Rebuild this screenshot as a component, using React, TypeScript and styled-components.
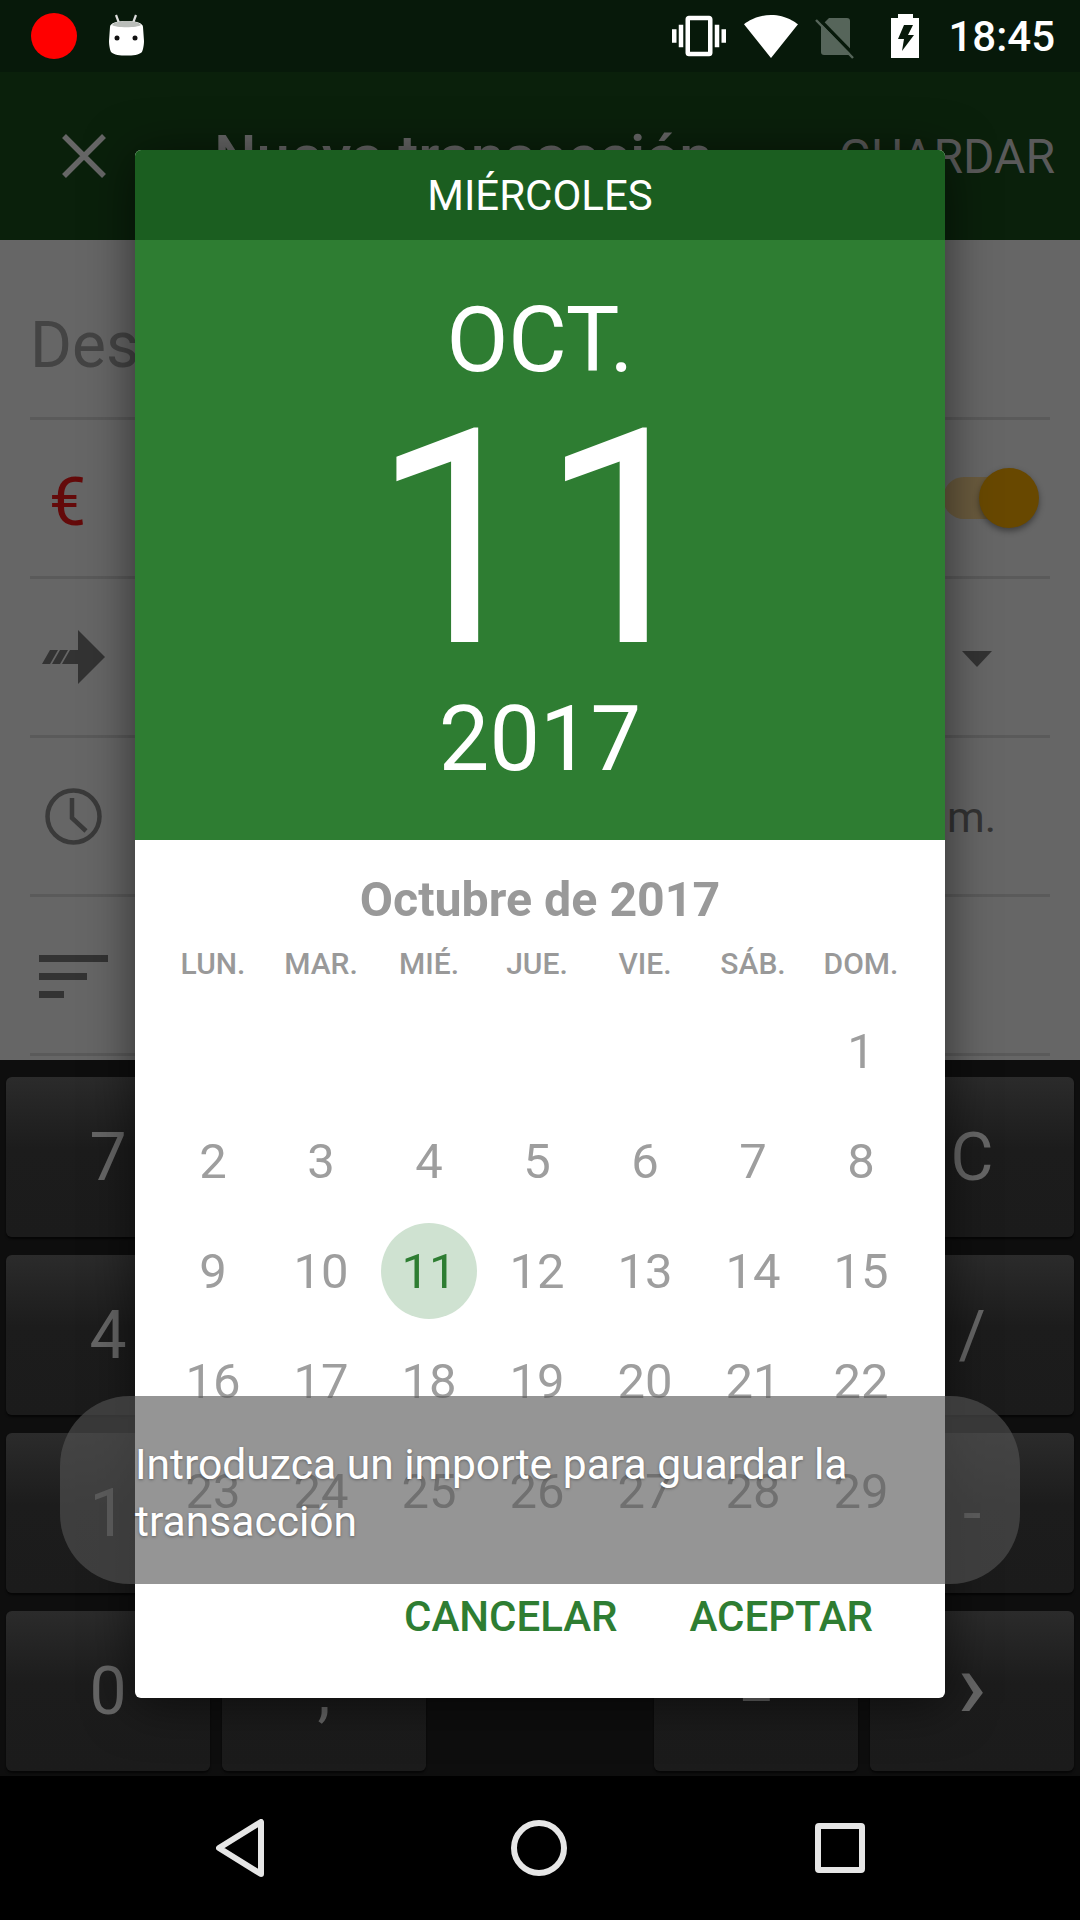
import React from "react";
import styled, { createGlobalStyle } from "styled-components";

const Global = createGlobalStyle`
  html, body { margin: 0; padding: 0; background: #000; }
  * { box-sizing: border-box; }
  body { font-family: Roboto, "Noto Sans", sans-serif; }
`;

const Screen = styled.div`
  position: relative;
  width: 1080px;
  height: 1920px;
  overflow: hidden;
  display: flex;
  flex-direction: column;
  background: #000;
`;

const StatusBar = styled.div`
  height: 72px;
  flex: none;
  background: #07190a;
  display: flex;
  align-items: center;
  padding: 0 25px 0 31px;
`;
const RecDot = styled.div`
  width: 46px;
  height: 46px;
  border-radius: 50%;
  background: #ff0000;
  margin-right: 32px;
`;
const BotSvg = styled.svg`
  margin-bottom: 3px;
`;
const StatusSpacer = styled.div`flex: 1;`;
const StatusIcons = styled.div`
  display: flex;
  align-items: center;
  gap: 18px;
`;
const SimSvg = styled.svg`
  margin: 3px 0 0 -1px;
`;
const BatterySvg = styled.svg`
  margin-left: 18px;
`;
const Clock = styled.span`
  font-size: 42px;
  font-weight: 500;
  color: #fff;
  margin-left: 29.5px;
`;

const AppBar = styled.div`
  height: 168px;
  flex: none;
  background: #0a200b;
  display: flex;
  align-items: center;
  padding: 0 25px 0 62px;
  color: #666;
`;
const Title = styled.div`
  font-size: 60px;
  font-weight: 500;
  margin-left: 108px;
  flex: 1;
  color: #666;
`;
const SaveAction = styled.div`
  font-size: 48px;
  color: #5a5a5a;
`;

const Form = styled.div`
  height: 820px;
  flex: none;
  background: #666;
  padding: 0 30px;
  display: flex;
  flex-direction: column;
`;
const Row = styled.div<{ $h: number }>`
  height: ${(p) => p.$h}px;
  flex: none;
  border-bottom: 3px solid #5a5a5a;
  display: flex;
  align-items: center;
  justify-content: space-between;
  color: #333;
`;
const DescText = styled.div`
  font-size: 64px;
  color: #444;
  padding: 34px 0 0 0;
`;
const Euro = styled.span`
  font-size: 66px;
  color: #640a0a;
  margin: 9px 0 0 19px;
`;
const ToggleTrack = styled.div`
  position: relative;
  width: 84px;
  height: 42px;
  border-radius: 21px;
  background: #6a5b3e;
  margin-right: 23px;
`;
const ToggleThumb = styled.div`
  position: absolute;
  right: -12px;
  top: -9px;
  width: 60px;
  height: 60px;
  border-radius: 50%;
  background: #684800;
  box-shadow: 0 3px 6px rgba(0, 0, 0, 0.4);
`;
const TimeText = styled.span`
  font-size: 43px;
  color: #333;
  margin: 2px 54px 0 0;
`;
const Caret = styled.div`
  width: 0;
  height: 0;
  border-left: 15px solid transparent;
  border-right: 15px solid transparent;
  border-top: 16px solid #333;
  margin: 4px 58px 0 0;
`;
const ArrowSvg = styled.svg`margin-left: 12px;`;
const ClockSvg = styled.svg`margin-left: 15px;`;
const NotesSvg = styled.svg`margin: 2px 0 0 9px;`;

const Keypad = styled.div`
  height: 716px;
  flex: none;
  background: #0e0e0e;
  padding: 17px 6px 6px;
  display: grid;
  grid-template-columns: repeat(5, 204px);
  grid-auto-rows: 160px;
  column-gap: 12px;
  row-gap: 18px;
`;
const Key = styled.div<{ $blank?: boolean; $chevron?: boolean }>`
  border-radius: 6px;
  background: ${(p) => (p.$blank ? "transparent" : "linear-gradient(#2b2b2b, #1c1c1c 45%, #1b1b1b)")};
  box-shadow: ${(p) => (p.$blank ? "none" : "0 2px 2px rgba(0,0,0,.6)")};
  color: #666;
  font-size: ${(p) => (p.$chevron ? 96 : 66)}px;
  font-weight: ${(p) => (p.$chevron ? 500 : 400)};
  padding-bottom: ${(p) => (p.$chevron ? 12 : 0)}px;
  display: flex;
  align-items: center;
  justify-content: center;
`;

const NavBar = styled.div`
  height: 144px;
  flex: none;
  background: #000;
  display: flex;
  align-items: center;
  justify-content: center;
  gap: 247.5px;
`;

const Dialog = styled.div`
  position: absolute;
  left: 135px;
  top: 150px;
  width: 810px;
  height: 1548px;
  border-radius: 6px;
  background: #fff;
  box-shadow: 0 6px 50px rgba(0, 0, 0, 0.55);
  overflow: hidden;
  display: flex;
  flex-direction: column;
`;
const DayBand = styled.div`
  height: 90px;
  flex: none;
  background: #1b5e20;
  color: #fff;
  font-size: 42px;
  display: flex;
  align-items: center;
  justify-content: center;
`;
const DateBlock = styled.div`
  height: 600px;
  flex: none;
  background: #2e7d32;
  color: #fff;
  display: flex;
  flex-direction: column;
  align-items: center;
`;
const MonthBig = styled.div`
  font-size: 90px;
  line-height: 90px;
  margin-top: 56px;
`;
const DayBig = styled.div`
  font-size: 300px;
  line-height: 260px;
  margin-top: 24px;
`;
const YearBig = styled.div`
  font-size: 90px;
  line-height: 90px;
  margin-top: 25px;
`;
const MonthTitle = styled.div`
  height: 109px;
  flex: none;
  padding-top: 10px;
  color: #999;
  font-size: 48.300px;
  font-weight: 700;
  display: flex;
  align-items: center;
  justify-content: center;
  text-align: center;
`;
const CalGrid = styled.div`
  display: grid;
  grid-template-columns: repeat(7, 108px);
  padding-left: 24px;
  justify-items: center;
  align-items: center;
`;
const WeekHead = styled.div`
  height: 30px;
  margin-bottom: 17px;
  font-size: 30px;
  font-weight: 500;
  line-height: 30px;
  color: #999;
`;
const Day = styled.div<{ $selected?: boolean }>`
  width: 96px;
  height: 110px;
  display: flex;
  align-items: center;
  justify-content: center;
  position: relative;
  font-size: 49px;
  color: ${(p) => (p.$selected ? "#2e7d32" : "#9e9e9e")};
  z-index: 0;
  ${(p) =>
    p.$selected &&
    `&::before {
      content: "";
      position: absolute;
      z-index: -1;
      left: 0;
      top: 7px;
      width: 96px;
      height: 96px;
      border-radius: 50%;
      background: #cfe2d1;
    }`}
`;
const Actions = styled.div`
  display: flex;
  justify-content: flex-end;
  gap: 72px;
  padding: 48px 72px 0 0;
`;
const ActionBtn = styled.div`
  color: #2e7d32;
  font-size: 42px;
  font-weight: 500;
  line-height: 46px;
`;

const Toast = styled.div`
  position: absolute;
  left: 60px;
  top: 1396px;
  width: 960px;
  height: 188px;
  border-radius: 70px;
  background: rgba(84, 84, 84, 0.62);
  padding: 40px 160px 0 75px;
  color: #fff;
  font-size: 42.6px;
  line-height: 57px;
  text-shadow: 0 1px 3px rgba(0, 0, 0, 0.35);
`;

const weekdays = ["LUN.", "MAR.", "MIÉ.", "JUE.", "VIE.", "SÁB.", "DOM."];
const days: (number | null)[] = [null, null, null, null, null, null, 1];
for (let d = 2; d <= 29; d++) days.push(d);

const keys = ["7", "8", "9", "*", "C", "4", "5", "6", "/", "/", "1", "2", "3", "+", "-", "0", ",", "", "=", "›"];

const Vibrate = () => (
  <svg width="54" height="54" viewBox="0 0 24 24" fill="#fff">
    <path d="M0 15h2V9H0v6zm3 2h2V7H3v10zm19-8v6h2V9h-2zm-3 8h2V7h-2v10zM16.5 3h-9C6.67 3 6 3.67 6 4.5v15c0 .83.67 1.5 1.5 1.5h9c.83 0 1.5-.67 1.5-1.5v-15c0-.83-.67-1.5-1.5-1.5zM16 19H8V5h8v14z" />
  </svg>
);
const Wifi = () => (
  <svg width="54" height="43" viewBox="0.36 3 23.28 18.5" fill="#fff">
    <path d="M12.01 21.49L23.64 7c-.45-.34-4.93-4-11.64-4C5.28 3 .81 6.66.36 7l11.63 14.49.01.01.01-.01z" />
  </svg>
);
const NoSim = () => (
  <SimSvg width="40" height="42" viewBox="0 0 40 42">
    <path d="M14 1h18a3 3 0 0 1 3 3v34H9a3 3 0 0 1-3-3V9z" fill="#56655a" />
    <path d="M3 1l37 38" stroke="#07190a" strokeWidth="3.5" />
    <path d="M1 3l37 38" stroke="#56655a" strokeWidth="2.5" />
  </SimSvg>
);
const Battery = () => (
  <BatterySvg width="28" height="44" viewBox="0 0 28 44" fill="#fff">
    <path
      fillRule="evenodd"
      d="M7 0h15v4h6v40H0V4h7zM13 11L7 25h6l-2 12 12-16h-6l5-10z"
    />
  </BatterySvg>
);
const Bot = () => (
  <BotSvg width="35" height="42" viewBox="0 0 35 42">
    <path d="M7 1l3 8M27 1l-3 8" stroke="#ddd" strokeWidth="2.2" />
    <path d="M1 13c0-4 7-6 16.500-6S34 9 34 13l1 14c0 4-1 9-2 11-3 3-9 3.500-15.500 3.500S5 41 2 38c-1-2-2-7-2-11z" fill="#fff" />
    <path d="M3 11c2-3 8-4 14.500-4S30 8 32 11c-3 3-26 3-29 0z" fill="#b9bdb9" />
    <circle cx="8" cy="24" r="2.5" fill="#111" />
    <circle cx="26" cy="24" r="2.5" fill="#111" />
  </BotSvg>
);
const CloseX = () => (
  <svg width="44" height="44" viewBox="0 0 44 44" stroke="#666" strokeWidth="5.5">
    <path d="M2 2l40 40M42 2L2 42" />
  </svg>
);
const ArrowIcon = () => (
  <ArrowSvg width="63" height="54" viewBox="0 0 63 54" fill="#333">
    <path d="M36 0L63 27L36 54V34H20L28 20H36zM0 34L8 20H16L8 34zM10 34L18 20H26L18 34z" />
  </ArrowSvg>
);
const ClockIcon = () => (
  <ClockSvg width="57" height="57" viewBox="0 0 57 57" fill="none" stroke="#3a3a3a" strokeWidth="4.5">
    <circle cx="28.500" cy="28.500" r="26" />
    <path d="M27 10V30L41 43" />
  </ClockSvg>
);
const NotesIcon = () => (
  <NotesSvg width="69" height="43" viewBox="0 0 69 43" fill="#333">
    <rect y="0" width="69" height="7" />
    <rect y="18" width="48" height="7" />
    <rect y="36" width="25" height="7" />
  </NotesSvg>
);
const Back = () => (
  <svg width="48" height="58" viewBox="0 0 48 58" fill="none" stroke="#e6e6e6" strokeWidth="6" strokeLinejoin="round">
    <path d="M45 3v52L3 29z" />
  </svg>
);
const Home = () => (
  <svg width="56" height="56" viewBox="0 0 56 56" fill="none" stroke="#e6e6e6" strokeWidth="6">
    <circle cx="28" cy="28" r="25" />
  </svg>
);
const Recent = () => (
  <svg width="50" height="50" viewBox="0 0 50 50" fill="none" stroke="#e6e6e6" strokeWidth="6" strokeLinejoin="round">
    <rect x="3" y="3" width="44" height="44" rx="1" />
  </svg>
);

export default function App() {
  return (
    <Screen>
      <Global />
      <StatusBar>
        <RecDot />
        <Bot />
        <StatusSpacer />
        <StatusIcons>
          <Vibrate />
          <Wifi />
          <NoSim />
          <Battery />
        </StatusIcons>
        <Clock>18:45</Clock>
      </StatusBar>
      <AppBar>
        <CloseX />
        <Title>Nueva transacción</Title>
        <SaveAction>GUARDAR</SaveAction>
      </AppBar>
      <Form>
        <Row $h={180}>
          <DescText>Descripción</DescText>
        </Row>
        <Row $h={159}>
          <Euro>€</Euro>
          <ToggleTrack>
            <ToggleThumb />
          </ToggleTrack>
        </Row>
        <Row $h={159}>
          <ArrowIcon />
          <Caret />
        </Row>
        <Row $h={159}>
          <ClockIcon />
          <TimeText>6:45 p. m.</TimeText>
        </Row>
        <Row $h={159}>
          <NotesIcon />
        </Row>
      </Form>
      <Keypad>
        {keys.map((k, i) => (
          <Key key={i} $blank={k === ""} $chevron={k === "›"}>
            {k}
          </Key>
        ))}
      </Keypad>
      <NavBar>
        <Back />
        <Home />
        <Recent />
      </NavBar>

      <Dialog>
        <DayBand>MIÉRCOLES</DayBand>
        <DateBlock>
          <MonthBig>OCT.</MonthBig>
          <DayBig>11</DayBig>
          <YearBig>2017</YearBig>
        </DateBlock>
        <MonthTitle>Octubre de 2017</MonthTitle>
        <CalGrid>
          {weekdays.map((w) => (
            <WeekHead key={w}>{w}</WeekHead>
          ))}
          {days.map((d, i) => (
            <Day key={i} $selected={d === 11}>
              {d}
            </Day>
          ))}
        </CalGrid>
        <Actions>
          <ActionBtn>CANCELAR</ActionBtn>
          <ActionBtn>ACEPTAR</ActionBtn>
        </Actions>
      </Dialog>

      <Toast>Introduzca un importe para guardar la transacción</Toast>
    </Screen>
  );
}
